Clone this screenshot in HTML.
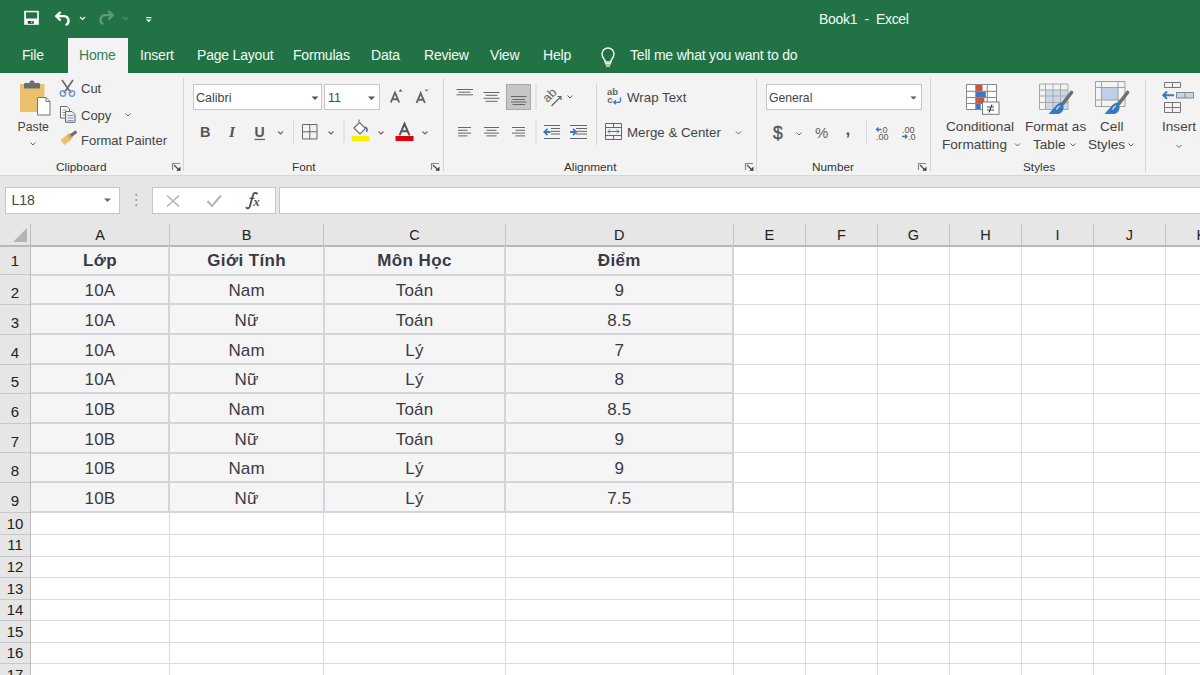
<!DOCTYPE html>
<html><head><meta charset="utf-8">
<style>
*{box-sizing:border-box;margin:0;padding:0}
html,body{width:1200px;height:675px;overflow:hidden;background:#fff;font-family:"Liberation Sans",sans-serif;color:#444}
.abs{position:absolute}
#title{left:0;top:0;width:1200px;height:73px;background:#217346}
.tab{position:absolute;top:46.5px;font-size:14px;color:#f2faf4;white-space:nowrap;letter-spacing:-0.2px}
#home{left:68px;top:38px;width:60px;height:35px;background:#f3f3f3}
#ribbon{left:0;top:73px;width:1200px;height:103px;background:#f3f3f3;border-bottom:1px solid #d6d6d6}
#fbar{left:0;top:176px;width:1200px;height:48px;background:#e6e6e6}
.t{position:absolute;white-space:nowrap;font-size:13px;color:#444}
.sep{position:absolute;width:1px;background:#d4d4d4}
.lbl{position:absolute;top:160px;font-size:11.8px;color:#333;white-space:nowrap}
</style></head><body>
<div id="title" class="abs"></div>
<div class="t" style="left:819px;top:10.5px;color:#f2faf4;font-size:14px;letter-spacing:-0.3px">Book1&nbsp; - &nbsp;Excel</div>

<svg class="abs" style="left:0;top:0" width="180" height="37">
 <rect x="24.2" y="10.8" width="14.6" height="14" fill="#fff"/>
 <rect x="26" y="12.3" width="11.2" height="6.2" fill="#217346"/>
 <rect x="27.8" y="21" width="6" height="2.8" fill="#1e4d33"/>
 <rect x="31" y="21.5" width="1.4" height="1.2" fill="#fff"/>
 <path d="M56.5 16.2H64.5A4.6 4.6 0 0 1 66.5 24.6" fill="none" stroke="#fff" stroke-width="2.3" stroke-linecap="round"/>
 <path d="M60 12.6L56.2 16.2L60 19.8" fill="none" stroke="#fff" stroke-width="2.3" stroke-linecap="round" stroke-linejoin="round"/>
 <path d="M80 17l2.5 2.5 2.5-2.5" fill="none" stroke="#fff" stroke-width="1.1"/>
 <path d="M112.5 15.2H104.5A4.6 4.6 0 0 0 102.5 23.6" fill="none" stroke="#5d9b78" stroke-width="2.3" stroke-linecap="round"/>
 <path d="M109 11.6L112.8 15.2L109 18.8" fill="none" stroke="#5d9b78" stroke-width="2.3" stroke-linecap="round" stroke-linejoin="round"/>
 <path d="M123 17l2.5 2.5 2.5-2.5" fill="none" stroke="#4f8f6b" stroke-width="1.1"/>
 <rect x="146" y="17" width="5.5" height="1.2" fill="#fff"/>
 <path d="M146 19.5h5.5l-2.75 2.8z" fill="#fff"/>
</svg>
<div id="home" class="abs"></div>
<div class="tab" style="left:22px">File</div>
<div class="tab" style="left:79px;color:#3a7f5a">Home</div>
<div class="tab" style="left:140px">Insert</div>
<div class="tab" style="left:197px">Page Layout</div>
<div class="tab" style="left:293px">Formulas</div>
<div class="tab" style="left:371px">Data</div>
<div class="tab" style="left:424px">Review</div>
<div class="tab" style="left:490px">View</div>
<div class="tab" style="left:543px">Help</div>
<svg class="abs" style="left:595px;top:42px" width="30" height="30">
 <path d="M10 18.5c-1-1.5-3-3.5-3-6.5a6 6 0 0 1 12 0c0 3-2 5-3 6.5v1.5h-6z" fill="none" stroke="#eef8f0" stroke-width="1.5"/>
 <rect x="10" y="21" width="6" height="1.6" fill="#eef8f0"/>
 <rect x="11" y="23.3" width="4" height="1.4" fill="#eef8f0"/>
</svg>
<div class="tab" style="left:630px">Tell me what you want to do</div>

<div id="ribbon" class="abs"></div>
<div id="fbar" class="abs"></div>

<!-- Clipboard -->
<svg class="abs" style="left:0;top:73px" width="190" height="103">
 <rect x="20" y="11" width="24.5" height="28" fill="#eac06c"/>
 <rect x="24" y="10" width="16" height="5.5" rx="1" fill="#6d6d6d"/>
 <rect x="29.5" y="7.5" width="5" height="4" rx="2" fill="#6d6d6d"/>
 <path d="M37.5 24.5h8.5l4 4v13.5h-12.5z" fill="#fff" stroke="#777" stroke-width="1"/>
 <path d="M46 24.5v4h4" fill="none" stroke="#777" stroke-width="1"/>
 <path d="M30.5 69.5l2.5 2.5 2.5-2.5" fill="none" stroke="#666" stroke-width="1"/>
 <!-- scissors -->
 <path d="M62 7l9 13M73 7l-9 13" stroke="#666" stroke-width="1.6" fill="none"/>
 <circle cx="63" cy="20.5" r="2.7" fill="none" stroke="#6c9bd2" stroke-width="1.4"/>
 <circle cx="72" cy="20.5" r="2.7" fill="none" stroke="#6c9bd2" stroke-width="1.4"/>
 <!-- copy -->
 <path d="M60.5 33.5h6.5l2.5 2.5v9h-9z" fill="#fff" stroke="#666" stroke-width="1"/>
 <path d="M62.5 37h4M62.5 39.5h5M62.5 42h5" stroke="#888" stroke-width="1"/>
 <path d="M65.5 38.5h6.5l3 3v7.8h-9.5z" fill="#e8ecf3" stroke="#666" stroke-width="1"/>
 <path d="M67.5 42.5h6M67.5 45h6M67.5 47.5h6" stroke="#8a9ab0" stroke-width="1"/>
 <!-- format painter -->
 <path d="M62.5 69.5L69.5 64" stroke="#eac06c" stroke-width="6.5"/>
 <path d="M68.5 64.5L71.5 62" stroke="#d2a85c" stroke-width="5"/>
 <path d="M71 62.5L76.5 58.5" stroke="#6d6d6d" stroke-width="3"/>
 <!-- launcher -->
 <path d="M172.5 97v-6.5h7.5" fill="none" stroke="#888" stroke-width="1.2"/>
 <path d="M174 92l5.5 5.5" fill="none" stroke="#444" stroke-width="1.1"/><path d="M180.5 93.5v4.3h-4.3z" fill="#444"/>
</svg>
<div class="t" style="left:17.5px;top:119.5px;font-size:12.3px">Paste</div>
<div class="t" style="left:81px;top:81px">Cut</div>
<div class="t" style="left:81px;top:108px">Copy</div>
<svg class="abs" style="left:124px;top:111px" width="10" height="8"><path d="M1.5 2.5l2.5 2.5 2.5-2.5" fill="none" stroke="#666" stroke-width="1"/></svg>
<div class="t" style="left:81px;top:133px">Format Painter</div>
<div class="lbl" style="left:56px">Clipboard</div>
<div class="sep" style="left:183px;top:78px;height:93px"></div>



<!-- Font group -->
<div class="abs" style="left:193px;top:84px;width:129px;height:26px;background:#fff;border:1px solid #c6c6c6"></div>
<div class="abs" style="left:324px;top:84px;width:56px;height:26px;background:#fff;border:1px solid #c6c6c6"></div>
<div class="t" style="left:196px;top:91px;font-size:12.5px">Calibri</div>
<div class="t" style="left:328px;top:91px;font-size:12.5px">11</div>
<svg class="abs" style="left:185px;top:73px" width="260" height="103">
 <path d="M126.5 23.5h7l-3.5 3.5z" fill="#555"/>
 <path d="M183 23.5h7l-3.5 3.5z" fill="#555"/>
 <!-- grow/shrink -->
 <path d="M205.8 29.5l4.2-9.8 4.2 9.8M207.3 26.2h5.4" fill="none" stroke="#666" stroke-width="1.9"/>
 <path d="M213.5 18.5l2-2.3 2 2.3z" fill="#555"/>
 <path d="M231.5 30l4.2-9.8 4.2 9.8M233 26.7h5.4" fill="none" stroke="#666" stroke-width="1.9"/>
 <path d="M239.5 16.5h4l-2 2.3z" fill="#5a8ac6"/>
 <!-- B I U -->
 <text x="15" y="64" font-family="Liberation Sans" font-weight="bold" font-size="14.5" fill="#555">B</text>
 <text x="44" y="64" font-family="Liberation Serif" font-style="italic" font-weight="bold" font-size="15.5" fill="#555">I</text>
 <text x="69.5" y="63.5" font-family="Liberation Sans" font-weight="bold" font-size="14" fill="#555">U</text>
 <rect x="69.5" y="65.8" width="10.5" height="1.3" fill="#666"/>
 <path d="M93 58.5l2.5 2.5 2.5-2.5" fill="none" stroke="#666" stroke-width="1.1"/>
 <rect x="108" y="47" width="1" height="23" fill="#d6d6d6"/>
 <!-- borders -->
 <path d="M117.5 51.5h14.5v14.5h-14.5zM124.75 51.5v14.5M117.5 58.75h14.5" fill="none" stroke="#666" stroke-width="1"/>
 <path d="M143.5 58.5l2.5 2.5 2.5-2.5" fill="none" stroke="#666" stroke-width="1.1"/>
 <rect x="158.5" y="47" width="1" height="23" fill="#d6d6d6"/>
 <!-- fill -->
 <path d="M169 55l5.5-5.5 6 6-5.5 5.5z" fill="#fff" stroke="#666" stroke-width="1.1"/>
 <path d="M174 49v-2.5" stroke="#666" stroke-width="1"/>
 <path d="M180 54c2 1 2.5 3 1.5 5" fill="none" stroke="#3a78c3" stroke-width="1.6"/>
 <rect x="166.7" y="62.8" width="17.6" height="5.5" fill="#f7f000"/>
 <path d="M193.5 58.5l2.5 2.5 2.5-2.5" fill="none" stroke="#666" stroke-width="1.1"/>
 <!-- font color -->
 <path d="M214.5 62.3l5-11.5 5 11.5M216.4 58.3h6.2" fill="none" stroke="#555" stroke-width="2"/>
 <rect x="210.5" y="63" width="18" height="5" fill="#e0000b"/>
 <path d="M237.5 58.5l2.5 2.5 2.5-2.5" fill="none" stroke="#666" stroke-width="1.1"/>
 <!-- launcher -->
 <path d="M246.5 97v-6.5h7.5" fill="none" stroke="#888" stroke-width="1.2"/>
 <path d="M248 92l5.5 5.5" fill="none" stroke="#444" stroke-width="1.1"/><path d="M254.5 93.5v4.3h-4.3z" fill="#444"/>
</svg>
<div class="lbl" style="left:292px">Font</div>
<div class="sep" style="left:443px;top:78px;height:93px"></div>

<!-- Alignment group -->
<div class="abs" style="left:506px;top:84px;width:25px;height:26px;background:#c6c6c6;border:1px solid #a9a9a9"></div>
<svg class="abs" style="left:445px;top:73px" width="320" height="103">
 <g stroke="#666" stroke-width="1.2">
  <path d="M11.5 16.5h16.5M13.5 19.2h12M11.5 21.8h16.5" stroke-width="1"/>
  <path d="M38.5 19.5h16M40.5 22.3h12M38.5 25.3h16M40.5 28.3h12" stroke-width="1"/>
  <path d="M66 23.5h15.5M67.5 26.5h12.5M66 29h15.5M67.5 31.5h12.5" stroke-width="1"/>
  <path d="M13 54.5h13M13 57.3h9.5M13 60.1h13M13 62.9h9.5" stroke-width="1"/>
  <path d="M39 54.5h15M41.5 57.3h10M39 60.1h15M41.5 62.9h10" stroke-width="1"/>
  <path d="M67 54.5h13M70.5 57.3h9.5M67 60.1h13M70.5 62.9h9.5" stroke-width="1"/>
 </g>
 <rect x="90.5" y="11" width="1" height="26" fill="#d6d6d6"/>
 <rect x="90.5" y="47" width="1" height="24" fill="#d6d6d6"/>
 <!-- orientation -->
 <text x="0" y="0" font-family="Liberation Sans" font-size="12.5" fill="#666" transform="translate(102.5,30) rotate(-45)">ab</text>
 <path d="M106.5 33l9.5-9.5M112.5 23.5h3.5v3.5" fill="none" stroke="#666" stroke-width="1.2"/>
 <path d="M122.5 22.5l2.5 2.5 2.5-2.5" fill="none" stroke="#666" stroke-width="1"/>
 <!-- indents -->
 <g stroke="#666" stroke-width="1">
  <path d="M99 52.5h16M106 55.5h9M106 58.3h9M106 61h9M99 65.5h16"/>
  <path d="M125 52.5h17M131 55.5h11M132 58.3h10M131 61h11M125 65.5h17"/>
 </g>
 <path d="M99.5 59h6M102.5 55.8l-3.2 3.2 3.2 3.2" fill="none" stroke="#3a78c3" stroke-width="1.8"/>
 <path d="M125 59h6M128 55.8l3.2 3.2-3.2 3.2" fill="none" stroke="#3a78c3" stroke-width="1.8"/>
 <rect x="151" y="10" width="1" height="62" fill="#d6d6d6"/>
 <!-- wrap -->
 <text x="162" y="22" font-family="Liberation Sans" font-weight="bold" font-size="9.5" fill="#666">ab</text>
 <text x="162.3" y="30.3" font-family="Liberation Sans" font-weight="bold" font-size="9.5" fill="#666">c</text>
 <path d="M175.5 24.5v3a1.8 1.8 0 0 1-1.8 1.8h-4.2M170.8 27.3l-2 2 2 2" fill="none" stroke="#3a78c3" stroke-width="1.3"/>
 <!-- merge -->
 <path d="M160.5 50.5h16v16h-16zM160.5 54.5h16M160.5 62.5h16M168.5 50.5v4M168.5 62.5v4" fill="none" stroke="#666" stroke-width="1"/>
 <path d="M163 58.5h11M165 56.5l-2 2 2 2M172 56.5l2 2-2 2" fill="none" stroke="#3a78c3" stroke-width="1"/>
 <path d="M291 58.5l2.5 2.5 2.5-2.5" fill="none" stroke="#666" stroke-width="1"/>
 <!-- launcher -->
 <path d="M300.5 97v-6.5h7.5" fill="none" stroke="#888" stroke-width="1.2"/>
 <path d="M302 92l5.5 5.5" fill="none" stroke="#444" stroke-width="1.1"/><path d="M308.5 93.5v4.3h-4.3z" fill="#444"/>
</svg>
<div class="t" style="left:627px;top:89.5px;font-size:13.3px">Wrap Text</div>
<div class="t" style="left:627px;top:125px;font-size:13.3px">Merge &amp; Center</div>
<div class="lbl" style="left:564px">Alignment</div>
<div class="sep" style="left:756px;top:78px;height:93px"></div>

<!-- Number group -->
<div class="abs" style="left:766px;top:84px;width:156px;height:26px;background:#fff;border:1px solid #c6c6c6"></div>
<div class="t" style="left:769px;top:91px;font-size:12.2px">General</div>
<svg class="abs" style="left:760px;top:73px" width="180" height="103">
 <path d="M150.5 23.5h6l-3 3z" fill="#555"/>
 <text x="13" y="66" font-family="Liberation Sans" font-size="17.5" fill="#555" stroke="#555" stroke-width="0.4">$</text>
 <path d="M36.5 59.5l2.5 2.5 2.5-2.5" fill="none" stroke="#666" stroke-width="1"/>
 <text x="55" y="65" font-family="Liberation Sans" font-size="15" fill="#666">%</text>
 <text x="85.5" y="62" font-family="Liberation Sans" font-weight="bold" font-size="17" fill="#555">,</text>
 <rect x="106" y="47" width="1" height="23" fill="#d6d6d6"/>
 <text x="120" y="60" font-family="Liberation Sans" font-size="9" fill="#555">.0</text>
 <text x="116" y="66.5" font-family="Liberation Sans" font-size="9" fill="#555">.00</text>
 <path d="M116.5 56.5h5M118.5 54.5l-2 2 2 2" fill="none" stroke="#3a78c3" stroke-width="1.3"/>
 <text x="142" y="60" font-family="Liberation Sans" font-size="9" fill="#555">.00</text>
 <text x="148" y="66.5" font-family="Liberation Sans" font-size="9" fill="#555">.0</text>
 <path d="M142 63.5h5M145 61.5l2 2-2 2" fill="none" stroke="#3a78c3" stroke-width="1.3"/>
 <!-- launcher -->
 <path d="M158.5 97v-6.5h7.5" fill="none" stroke="#888" stroke-width="1.2"/>
 <path d="M160 92l5.5 5.5" fill="none" stroke="#444" stroke-width="1.1"/><path d="M166.5 93.5v4.3h-4.3z" fill="#444"/>
</svg>
<div class="lbl" style="left:812px">Number</div>
<div class="sep" style="left:930px;top:78px;height:93px"></div>

<!-- Styles group -->
<svg class="abs" style="left:930px;top:73px" width="270" height="103">
 <!-- conditional formatting -->
 <rect x="36.5" y="11.5" width="30" height="25" fill="#fff"/>
 <rect x="46" y="11.5" width="6.5" height="6.5" fill="#d9512c"/>
 <rect x="46" y="18.5" width="9.8" height="5.8" fill="#3a78c3"/>
 <rect x="46" y="24.5" width="8.3" height="5.8" fill="#d9512c"/>
 <rect x="46" y="30.5" width="4.7" height="6" fill="#3a78c3"/>
 <path d="M36.5 11.5h30v25h-30zM36.5 18.3h30M36.5 24.5h30M36.5 30.5h30M45.7 11.5v25M57.3 11.5v25" fill="none" stroke="#888" stroke-width="1"/>
 <rect x="52.5" y="29" width="16.5" height="12.3" fill="#fff" stroke="#777" stroke-width="1"/>
 <path d="M57 34h7M57 37h7M62 31.5l-3 8" stroke="#444" stroke-width="1.1"/>
 <path d="M85 37.5l2.5 2.5 2.5-2.5" transform="translate(0,33)" fill="none" stroke="#666" stroke-width="1"/>
 <!-- format as table -->
 <rect x="115.5" y="17" width="22.5" height="19.5" fill="#c9d9ea"/>
 <path d="M109.5 11h28.5v25.5h-28.5zM109.5 17h28.5M109.5 23h28.5M109.5 29.5h28.5M115.5 11v25.5M123 11v25.5M130.5 11v25.5" fill="none" stroke="#a8a8a8" stroke-width="1"/>
 <path d="M141.5 19.5L133 30.5" stroke="#6f6f6f" stroke-width="3.6" stroke-linecap="round"/>
 <path d="M132 29.5c-2 0-4 1-6 3l-7.5 8.5h9c3 0 5.5-2.5 6-5.5 0.3-2.5-0.3-4.5-1.5-6z" fill="#3a78c3"/>
 <path d="M130 33c-1.5 0.5-3 2-3.5 3.5" stroke="#dfe9f5" stroke-width="1.2" fill="none"/>
 <path d="M140.5 40.5l2.5 2.5 2.5-2.5" transform="translate(0,30)" fill="none" stroke="#666" stroke-width="1"/>
 <!-- cell styles -->
 <rect x="171.5" y="14.5" width="16.5" height="12.5" fill="#bcd1e8"/>
 <path d="M165.5 8.5h29.5v25h-29.5zM165.5 14.5h29.5M165.5 27h29.5M171.5 8.5v25M188 8.5v25" fill="none" stroke="#a0a0a0" stroke-width="1"/>
 <path d="M197.5 19.5L189 30.5" stroke="#6f6f6f" stroke-width="3.6" stroke-linecap="round"/>
 <path d="M188 29.5c-2 0-4 1-6 3l-7.5 8.5h9c3 0 5.5-2.5 6-5.5 0.3-2.5-0.3-4.5-1.5-6z" fill="#3a78c3"/>
 <path d="M186 33c-1.5 0.5-3 2-3.5 3.5" stroke="#dfe9f5" stroke-width="1.2" fill="none"/>
 <path d="M198.5 40.5l2.5 2.5 2.5-2.5" transform="translate(0,30)" fill="none" stroke="#666" stroke-width="1"/>
 <rect x="215" y="7" width="1" height="92" fill="#d6d6d6"/>
 <!-- insert -->
 <path d="M234.5 9.5h16v5h-16zM242.5 9.5v5" fill="none" stroke="#777" stroke-width="1"/>
 <rect x="246.5" y="19.5" width="17" height="5.5" fill="#c5d6ea" stroke="#888" stroke-width="1"/>
 <path d="M255 19.5v5.5" stroke="#888" stroke-width="1"/>
 <path d="M233 22.2h11M237 18.5l-3.7 3.7 3.7 3.7" fill="none" stroke="#3a78c3" stroke-width="2"/>
 <path d="M234.5 29.5h16v10h-16zM234.5 34.5h16M242.5 29.5v10" fill="none" stroke="#777" stroke-width="1"/>
 <path d="M246.5 72l2.5 2.5 2.5-2.5" fill="none" stroke="#666" stroke-width="1"/>
</svg>
<div class="t" style="left:946px;top:119px;font-size:13.6px">Conditional</div>
<div class="t" style="left:942px;top:137px;font-size:13.6px">Formatting</div>
<div class="t" style="left:1025px;top:119px;font-size:13.6px">Format as</div>
<div class="t" style="left:1033px;top:137px;font-size:13.6px">Table</div>
<div class="t" style="left:1100px;top:119px;font-size:13.6px">Cell</div>
<div class="t" style="left:1088px;top:137px;font-size:13.6px">Styles</div>
<div class="t" style="left:1162px;top:119px;font-size:13.6px">Insert</div>
<div class="lbl" style="left:1023px">Styles</div>
<!--GRID-->
<!-- formula bar -->
<div class="abs" style="left:5px;top:187px;width:115px;height:27px;background:#fff;border:1px solid #c6c6c6"></div>
<div class="t" style="left:11.5px;top:192px;font-size:14px">L18</div>
<div class="abs" style="left:152px;top:187px;width:124px;height:27px;background:#fff;border:1px solid #c6c6c6"></div>
<div class="abs" style="left:279px;top:187px;width:925px;height:27px;background:#fff;border:1px solid #c6c6c6"></div>
<svg class="abs" style="left:0;top:176px" width="280" height="48">
 <path d="M104 22.5h7l-3.5 3.5z" fill="#666"/>
 <circle cx="136.2" cy="19" r="1.1" fill="#999"/><circle cx="136.2" cy="24" r="1.1" fill="#999"/><circle cx="136.2" cy="29" r="1.1" fill="#999"/>
 <path d="M167 19.5l12 11M179 19.5l-12 11" stroke="#b4b4b4" stroke-width="1.6"/>
 <path d="M207.5 25l4.5 5 9-10.5" fill="none" stroke="#b4b4b4" stroke-width="2"/>
 <path d="M257 17.5c-1.2-1.2-3.4-0.6-4 1.5l-3.2 11.5c-0.6 1.8-2.2 2.3-3.3 1.3" fill="none" stroke="#555" stroke-width="1.9" stroke-linecap="round"/><path d="M249.5 22.3h5" stroke="#555" stroke-width="1.3"/>
 <text x="253.3" y="29.8" font-family="Liberation Serif" font-style="italic" font-weight="bold" font-size="13" fill="#555">x</text>
</svg>
<div class="abs" style="left:0;top:224px;width:1200px;height:22px;background:#e6e6e6"></div>
<div class="abs" style="left:0;top:245px;width:30px;height:430px;background:#e6e6e6"></div>
<div class="abs" style="left:31px;top:246px;width:702px;height:266px;background:#f5f5f6"></div>
<svg class="abs" style="left:0;top:224px" width="31" height="22"><path d="M27 4v14h-14z" fill="#b4b4b4"/></svg>
<div class="abs" style="left:169px;top:224px;width:1px;height:21px;background:#c4c4c4"></div>
<div class="abs" style="left:169px;top:246px;width:1px;height:430px;background:#dadada"></div>
<div class="abs" style="left:323px;top:224px;width:1px;height:21px;background:#c4c4c4"></div>
<div class="abs" style="left:323px;top:246px;width:1px;height:430px;background:#dadada"></div>
<div class="abs" style="left:505px;top:224px;width:1px;height:21px;background:#c4c4c4"></div>
<div class="abs" style="left:505px;top:246px;width:1px;height:430px;background:#dadada"></div>
<div class="abs" style="left:733px;top:224px;width:1px;height:21px;background:#c4c4c4"></div>
<div class="abs" style="left:733px;top:246px;width:1px;height:430px;background:#dadada"></div>
<div class="abs" style="left:805px;top:224px;width:1px;height:21px;background:#c4c4c4"></div>
<div class="abs" style="left:805px;top:246px;width:1px;height:430px;background:#dadada"></div>
<div class="abs" style="left:877px;top:224px;width:1px;height:21px;background:#c4c4c4"></div>
<div class="abs" style="left:877px;top:246px;width:1px;height:430px;background:#dadada"></div>
<div class="abs" style="left:949px;top:224px;width:1px;height:21px;background:#c4c4c4"></div>
<div class="abs" style="left:949px;top:246px;width:1px;height:430px;background:#dadada"></div>
<div class="abs" style="left:1021px;top:224px;width:1px;height:21px;background:#c4c4c4"></div>
<div class="abs" style="left:1021px;top:246px;width:1px;height:430px;background:#dadada"></div>
<div class="abs" style="left:1093px;top:224px;width:1px;height:21px;background:#c4c4c4"></div>
<div class="abs" style="left:1093px;top:246px;width:1px;height:430px;background:#dadada"></div>
<div class="abs" style="left:1165px;top:224px;width:1px;height:21px;background:#c4c4c4"></div>
<div class="abs" style="left:1165px;top:246px;width:1px;height:430px;background:#dadada"></div>
<div class="abs" style="left:1237px;top:224px;width:1px;height:21px;background:#c4c4c4"></div>
<div class="abs" style="left:1237px;top:246px;width:1px;height:430px;background:#dadada"></div>
<div class="abs" style="left:0px;top:245px;width:1200px;height:2px;background:#b8b8b8"></div>
<div class="abs" style="left:31px;top:274px;width:1169px;height:1px;background:#dadada"></div>
<div class="abs" style="left:0px;top:274px;width:30px;height:1px;background:#c8c8c8"></div>
<div class="abs" style="left:31px;top:304px;width:1169px;height:1px;background:#dadada"></div>
<div class="abs" style="left:0px;top:304px;width:30px;height:1px;background:#c8c8c8"></div>
<div class="abs" style="left:31px;top:334px;width:1169px;height:1px;background:#dadada"></div>
<div class="abs" style="left:0px;top:334px;width:30px;height:1px;background:#c8c8c8"></div>
<div class="abs" style="left:31px;top:364px;width:1169px;height:1px;background:#dadada"></div>
<div class="abs" style="left:0px;top:364px;width:30px;height:1px;background:#c8c8c8"></div>
<div class="abs" style="left:31px;top:393px;width:1169px;height:1px;background:#dadada"></div>
<div class="abs" style="left:0px;top:393px;width:30px;height:1px;background:#c8c8c8"></div>
<div class="abs" style="left:31px;top:423px;width:1169px;height:1px;background:#dadada"></div>
<div class="abs" style="left:0px;top:423px;width:30px;height:1px;background:#c8c8c8"></div>
<div class="abs" style="left:31px;top:452px;width:1169px;height:1px;background:#dadada"></div>
<div class="abs" style="left:0px;top:452px;width:30px;height:1px;background:#c8c8c8"></div>
<div class="abs" style="left:31px;top:482px;width:1169px;height:1px;background:#dadada"></div>
<div class="abs" style="left:0px;top:482px;width:30px;height:1px;background:#c8c8c8"></div>
<div class="abs" style="left:31px;top:512px;width:1169px;height:1px;background:#dadada"></div>
<div class="abs" style="left:0px;top:512px;width:30px;height:1px;background:#c8c8c8"></div>
<div class="abs" style="left:31px;top:534px;width:1169px;height:1px;background:#dadada"></div>
<div class="abs" style="left:0px;top:534px;width:30px;height:1px;background:#c8c8c8"></div>
<div class="abs" style="left:31px;top:556px;width:1169px;height:1px;background:#dadada"></div>
<div class="abs" style="left:0px;top:556px;width:30px;height:1px;background:#c8c8c8"></div>
<div class="abs" style="left:31px;top:577px;width:1169px;height:1px;background:#dadada"></div>
<div class="abs" style="left:0px;top:577px;width:30px;height:1px;background:#c8c8c8"></div>
<div class="abs" style="left:31px;top:599px;width:1169px;height:1px;background:#dadada"></div>
<div class="abs" style="left:0px;top:599px;width:30px;height:1px;background:#c8c8c8"></div>
<div class="abs" style="left:31px;top:620px;width:1169px;height:1px;background:#dadada"></div>
<div class="abs" style="left:0px;top:620px;width:30px;height:1px;background:#c8c8c8"></div>
<div class="abs" style="left:31px;top:642px;width:1169px;height:1px;background:#dadada"></div>
<div class="abs" style="left:0px;top:642px;width:30px;height:1px;background:#c8c8c8"></div>
<div class="abs" style="left:31px;top:663px;width:1169px;height:1px;background:#dadada"></div>
<div class="abs" style="left:0px;top:663px;width:30px;height:1px;background:#c8c8c8"></div>
<div class="abs" style="left:31px;top:685px;width:1169px;height:1px;background:#dadada"></div>
<div class="abs" style="left:0px;top:685px;width:30px;height:1px;background:#c8c8c8"></div>
<div class="abs" style="left:30px;top:224px;width:1px;height:451px;background:#bdbdbd"></div>
<div class="abs" style="left:31px;top:274px;width:703px;height:2px;background:#d4d4da"></div>
<div class="abs" style="left:31px;top:303px;width:703px;height:2px;background:#d4d4da"></div>
<div class="abs" style="left:31px;top:333px;width:703px;height:2px;background:#d4d4da"></div>
<div class="abs" style="left:31px;top:363px;width:703px;height:2px;background:#d4d4da"></div>
<div class="abs" style="left:31px;top:392px;width:703px;height:2px;background:#d4d4da"></div>
<div class="abs" style="left:31px;top:422px;width:703px;height:2px;background:#d4d4da"></div>
<div class="abs" style="left:31px;top:452px;width:703px;height:2px;background:#d4d4da"></div>
<div class="abs" style="left:31px;top:481px;width:703px;height:2px;background:#d4d4da"></div>
<div class="abs" style="left:31px;top:511px;width:703px;height:2px;background:#d4d4da"></div>
<div class="abs" style="left:168px;top:246px;width:2px;height:267px;background:#d4d4da"></div>
<div class="abs" style="left:323px;top:246px;width:2px;height:267px;background:#d4d4da"></div>
<div class="abs" style="left:504px;top:246px;width:2px;height:267px;background:#d4d4da"></div>
<div class="abs" style="left:732px;top:246px;width:2px;height:267px;background:#d4d4da"></div>
<div class="abs" style="left:30.5px;top:227px;width:139.0px;text-align:center;font-size:14.5px;color:#222;line-height:16px">A</div>
<div class="abs" style="left:169.5px;top:227px;width:154.3px;text-align:center;font-size:14.5px;color:#222;line-height:16px">B</div>
<div class="abs" style="left:323.8px;top:227px;width:181.5px;text-align:center;font-size:14.5px;color:#222;line-height:16px">C</div>
<div class="abs" style="left:505.3px;top:227px;width:227.99999999999994px;text-align:center;font-size:14.5px;color:#222;line-height:16px">D</div>
<div class="abs" style="left:733.3px;top:227px;width:72.0px;text-align:center;font-size:14.5px;color:#222;line-height:16px">E</div>
<div class="abs" style="left:805.3px;top:227px;width:72.20000000000005px;text-align:center;font-size:14.5px;color:#222;line-height:16px">F</div>
<div class="abs" style="left:877.5px;top:227px;width:72.0px;text-align:center;font-size:14.5px;color:#222;line-height:16px">G</div>
<div class="abs" style="left:949.5px;top:227px;width:72.0px;text-align:center;font-size:14.5px;color:#222;line-height:16px">H</div>
<div class="abs" style="left:1021.5px;top:227px;width:72.0px;text-align:center;font-size:14.5px;color:#222;line-height:16px">I</div>
<div class="abs" style="left:1093.5px;top:227px;width:71.79999999999995px;text-align:center;font-size:14.5px;color:#222;line-height:16px">J</div>
<div class="abs" style="left:1165.3px;top:227px;width:72.0px;text-align:center;font-size:14.5px;color:#222;line-height:16px">K</div>
<div class="abs" style="left:0;top:253.3px;width:30px;text-align:center;font-size:15px;color:#222;line-height:16px">1</div>
<div class="abs" style="left:0;top:285.3px;width:30px;text-align:center;font-size:15px;color:#222;line-height:16px">2</div>
<div class="abs" style="left:0;top:315.0px;width:30px;text-align:center;font-size:15px;color:#222;line-height:16px">3</div>
<div class="abs" style="left:0;top:344.6px;width:30px;text-align:center;font-size:15px;color:#222;line-height:16px">4</div>
<div class="abs" style="left:0;top:374.3px;width:30px;text-align:center;font-size:15px;color:#222;line-height:16px">5</div>
<div class="abs" style="left:0;top:404.0px;width:30px;text-align:center;font-size:15px;color:#222;line-height:16px">6</div>
<div class="abs" style="left:0;top:433.6px;width:30px;text-align:center;font-size:15px;color:#222;line-height:16px">7</div>
<div class="abs" style="left:0;top:463.0px;width:30px;text-align:center;font-size:15px;color:#222;line-height:16px">8</div>
<div class="abs" style="left:0;top:493.2px;width:30px;text-align:center;font-size:15px;color:#222;line-height:16px">9</div>
<div class="abs" style="left:0;top:515.6px;width:30px;text-align:center;font-size:15px;color:#222;line-height:16px">10</div>
<div class="abs" style="left:0;top:537.2px;width:30px;text-align:center;font-size:15px;color:#222;line-height:16px">11</div>
<div class="abs" style="left:0;top:559.0px;width:30px;text-align:center;font-size:15px;color:#222;line-height:16px">12</div>
<div class="abs" style="left:0;top:580.6px;width:30px;text-align:center;font-size:15px;color:#222;line-height:16px">13</div>
<div class="abs" style="left:0;top:602.2px;width:30px;text-align:center;font-size:15px;color:#222;line-height:16px">14</div>
<div class="abs" style="left:0;top:623.7px;width:30px;text-align:center;font-size:15px;color:#222;line-height:16px">15</div>
<div class="abs" style="left:0;top:644.8px;width:30px;text-align:center;font-size:15px;color:#222;line-height:16px">16</div>
<div class="abs" style="left:0;top:666.5px;width:30px;text-align:center;font-size:15px;color:#222;line-height:16px">17</div>
<div class="abs" style="left:30.5px;top:251.0px;width:139.0px;text-align:center;font-size:17px;font-weight:bold;color:#3a3a46;line-height:19px;letter-spacing:0.4px">Lớp</div>
<div class="abs" style="left:169.5px;top:251.0px;width:154.3px;text-align:center;font-size:17px;font-weight:bold;color:#3a3a46;line-height:19px;letter-spacing:0.4px">Giới Tính</div>
<div class="abs" style="left:323.8px;top:251.0px;width:181.5px;text-align:center;font-size:17px;font-weight:bold;color:#3a3a46;line-height:19px;letter-spacing:0.4px">Môn Học</div>
<div class="abs" style="left:505.3px;top:251.0px;width:227.99999999999994px;text-align:center;font-size:17px;font-weight:bold;color:#3a3a46;line-height:19px;letter-spacing:0.4px">Điểm</div>
<div class="abs" style="left:30.5px;top:281.2px;width:139.0px;text-align:center;font-size:17px;font-weight:normal;color:#3a3a46;line-height:19px;letter-spacing:0.2px">10A</div>
<div class="abs" style="left:169.5px;top:281.2px;width:154.3px;text-align:center;font-size:17px;font-weight:normal;color:#3a3a46;line-height:19px;letter-spacing:0.2px">Nam</div>
<div class="abs" style="left:323.8px;top:281.2px;width:181.5px;text-align:center;font-size:17px;font-weight:normal;color:#3a3a46;line-height:19px;letter-spacing:0.2px">Toán</div>
<div class="abs" style="left:505.3px;top:281.2px;width:227.99999999999994px;text-align:center;font-size:17px;font-weight:normal;color:#3a3a46;line-height:19px;letter-spacing:0.2px">9</div>
<div class="abs" style="left:30.5px;top:310.9px;width:139.0px;text-align:center;font-size:17px;font-weight:normal;color:#3a3a46;line-height:19px;letter-spacing:0.2px">10A</div>
<div class="abs" style="left:169.5px;top:310.9px;width:154.3px;text-align:center;font-size:17px;font-weight:normal;color:#3a3a46;line-height:19px;letter-spacing:0.2px">Nữ</div>
<div class="abs" style="left:323.8px;top:310.9px;width:181.5px;text-align:center;font-size:17px;font-weight:normal;color:#3a3a46;line-height:19px;letter-spacing:0.2px">Toán</div>
<div class="abs" style="left:505.3px;top:310.9px;width:227.99999999999994px;text-align:center;font-size:17px;font-weight:normal;color:#3a3a46;line-height:19px;letter-spacing:0.2px">8.5</div>
<div class="abs" style="left:30.5px;top:340.5px;width:139.0px;text-align:center;font-size:17px;font-weight:normal;color:#3a3a46;line-height:19px;letter-spacing:0.2px">10A</div>
<div class="abs" style="left:169.5px;top:340.5px;width:154.3px;text-align:center;font-size:17px;font-weight:normal;color:#3a3a46;line-height:19px;letter-spacing:0.2px">Nam</div>
<div class="abs" style="left:323.8px;top:340.5px;width:181.5px;text-align:center;font-size:17px;font-weight:normal;color:#3a3a46;line-height:19px;letter-spacing:0.2px">Lý</div>
<div class="abs" style="left:505.3px;top:340.5px;width:227.99999999999994px;text-align:center;font-size:17px;font-weight:normal;color:#3a3a46;line-height:19px;letter-spacing:0.2px">7</div>
<div class="abs" style="left:30.5px;top:370.2px;width:139.0px;text-align:center;font-size:17px;font-weight:normal;color:#3a3a46;line-height:19px;letter-spacing:0.2px">10A</div>
<div class="abs" style="left:169.5px;top:370.2px;width:154.3px;text-align:center;font-size:17px;font-weight:normal;color:#3a3a46;line-height:19px;letter-spacing:0.2px">Nữ</div>
<div class="abs" style="left:323.8px;top:370.2px;width:181.5px;text-align:center;font-size:17px;font-weight:normal;color:#3a3a46;line-height:19px;letter-spacing:0.2px">Lý</div>
<div class="abs" style="left:505.3px;top:370.2px;width:227.99999999999994px;text-align:center;font-size:17px;font-weight:normal;color:#3a3a46;line-height:19px;letter-spacing:0.2px">8</div>
<div class="abs" style="left:30.5px;top:399.9px;width:139.0px;text-align:center;font-size:17px;font-weight:normal;color:#3a3a46;line-height:19px;letter-spacing:0.2px">10B</div>
<div class="abs" style="left:169.5px;top:399.9px;width:154.3px;text-align:center;font-size:17px;font-weight:normal;color:#3a3a46;line-height:19px;letter-spacing:0.2px">Nam</div>
<div class="abs" style="left:323.8px;top:399.9px;width:181.5px;text-align:center;font-size:17px;font-weight:normal;color:#3a3a46;line-height:19px;letter-spacing:0.2px">Toán</div>
<div class="abs" style="left:505.3px;top:399.9px;width:227.99999999999994px;text-align:center;font-size:17px;font-weight:normal;color:#3a3a46;line-height:19px;letter-spacing:0.2px">8.5</div>
<div class="abs" style="left:30.5px;top:429.5px;width:139.0px;text-align:center;font-size:17px;font-weight:normal;color:#3a3a46;line-height:19px;letter-spacing:0.2px">10B</div>
<div class="abs" style="left:169.5px;top:429.5px;width:154.3px;text-align:center;font-size:17px;font-weight:normal;color:#3a3a46;line-height:19px;letter-spacing:0.2px">Nữ</div>
<div class="abs" style="left:323.8px;top:429.5px;width:181.5px;text-align:center;font-size:17px;font-weight:normal;color:#3a3a46;line-height:19px;letter-spacing:0.2px">Toán</div>
<div class="abs" style="left:505.3px;top:429.5px;width:227.99999999999994px;text-align:center;font-size:17px;font-weight:normal;color:#3a3a46;line-height:19px;letter-spacing:0.2px">9</div>
<div class="abs" style="left:30.5px;top:458.9px;width:139.0px;text-align:center;font-size:17px;font-weight:normal;color:#3a3a46;line-height:19px;letter-spacing:0.2px">10B</div>
<div class="abs" style="left:169.5px;top:458.9px;width:154.3px;text-align:center;font-size:17px;font-weight:normal;color:#3a3a46;line-height:19px;letter-spacing:0.2px">Nam</div>
<div class="abs" style="left:323.8px;top:458.9px;width:181.5px;text-align:center;font-size:17px;font-weight:normal;color:#3a3a46;line-height:19px;letter-spacing:0.2px">Lý</div>
<div class="abs" style="left:505.3px;top:458.9px;width:227.99999999999994px;text-align:center;font-size:17px;font-weight:normal;color:#3a3a46;line-height:19px;letter-spacing:0.2px">9</div>
<div class="abs" style="left:30.5px;top:488.5px;width:139.0px;text-align:center;font-size:17px;font-weight:normal;color:#3a3a46;line-height:19px;letter-spacing:0.2px">10B</div>
<div class="abs" style="left:169.5px;top:488.5px;width:154.3px;text-align:center;font-size:17px;font-weight:normal;color:#3a3a46;line-height:19px;letter-spacing:0.2px">Nữ</div>
<div class="abs" style="left:323.8px;top:488.5px;width:181.5px;text-align:center;font-size:17px;font-weight:normal;color:#3a3a46;line-height:19px;letter-spacing:0.2px">Lý</div>
<div class="abs" style="left:505.3px;top:488.5px;width:227.99999999999994px;text-align:center;font-size:17px;font-weight:normal;color:#3a3a46;line-height:19px;letter-spacing:0.2px">7.5</div>
<!--/GRID-->
</body></html>
